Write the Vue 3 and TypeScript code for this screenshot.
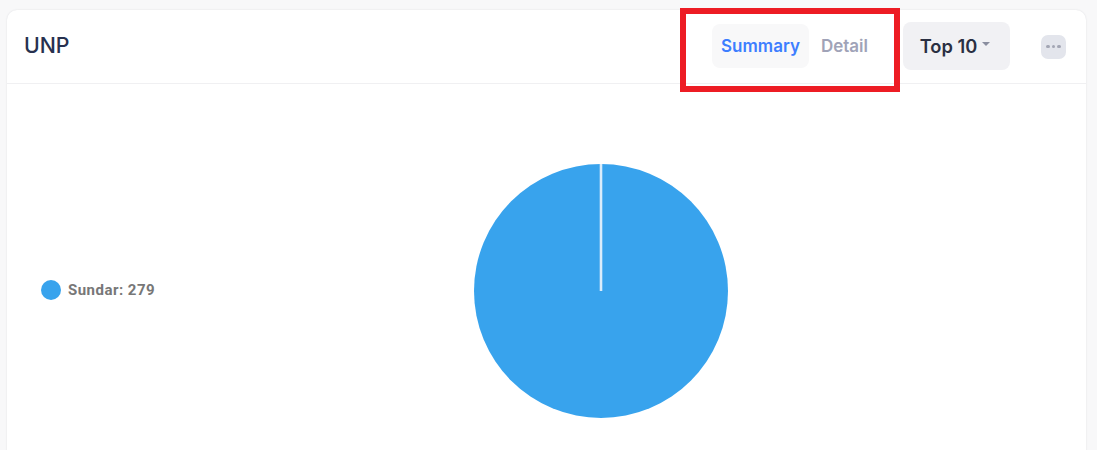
<script setup lang="ts">
const tabs: { label: string; active: boolean }[] = [
  { label: 'Summary', active: true },
  { label: 'Detail', active: false },
]
</script>

<template>
  <div class="page">
    <section class="card">
      <header class="head">
        <h2 class="title">UNP</h2>
        <nav class="tabs">
          <a v-for="t in tabs" :key="t.label" class="tab" :class="{ active: t.active }">{{ t.label }}</a>
        </nav>
        <button class="top">Top 10<span class="caret"></span></button>
        <button class="more" aria-label="More"><i></i><i></i><i></i></button>
      </header>
      <div class="body">
        <div class="legend">
          <span class="dot"></span>
          <span class="label">Sundar: 279</span>
        </div>
        <svg class="pie" width="254" height="254" viewBox="0 0 254 254">
          <circle cx="127" cy="127" r="127" fill="#38a3ed" />
          <line x1="127" y1="0" x2="127" y2="127" stroke="#d9ecfb" stroke-width="2.6" />
        </svg>
      </div>
      <div class="mark"></div>
    </section>
  </div>
</template>

<style>
html, body { margin: 0; background: #fff; }
</style>

<style scoped>
.page {
  width: 1097px;
  height: 450px;
  box-sizing: border-box;
  padding: 10px 11px 0 7px;
  background: #f8f8f9;
  overflow: hidden;
  font-family: Inter, "Liberation Sans", sans-serif;
}
.card {
  position: relative;
  height: 460px;
  background: #fff;
  border-radius: 10px;
  box-shadow: 0 0 2px rgba(30, 40, 60, 0.12);
}
.head {
  height: 74px;
  box-sizing: border-box;
  border-bottom: 1px solid #f0f0f2;
  display: flex;
  align-items: center;
  padding: 0 20px 0 17px;
}
.title {
  margin: 0 auto 4px 0;
  font-size: 21.3px;
  font-weight: 500;
  line-height: 24px;
  color: #27314f;
}
.tabs {
  display: flex;
  margin-bottom: 2px;
}
.tab {
  height: 44px;
  box-sizing: border-box;
  display: flex;
  align-items: center;
  padding: 0 9px 0 12px;
  margin-right: 26px;
  font-size: 17px;
  font-weight: 600;
  color: #a0a3b8;
  border-radius: 8px;
}
.tab:first-child { margin-right: 0; padding: 0 9px; }
.tab.active {
  background: #f8f8f9;
  color: #3d7eff;
}
.top {
  width: 107px;
  height: 48px;
  margin: 0 31px 2px 0;
  padding: 0 3px 0 0;
  border: 0;
  border-radius: 8px;
  background: #f1f1f4;
  color: #2a2f42;
  font: 600 18.3px Inter, "Liberation Sans", sans-serif;
  display: flex;
  align-items: center;
  justify-content: center;
}
.caret {
  margin-left: 5px;
  margin-bottom: 3px;
  border-left: 4px solid transparent;
  border-right: 4px solid transparent;
  border-top: 4px solid #8a8e9f;
}
.more {
  width: 25px;
  height: 24px;
  padding: 0;
  border: 0;
  border-radius: 7px;
  background: #e3e5ec;
  display: flex;
  align-items: center;
  justify-content: center;
  gap: 2px;
}
.more i {
  width: 3.5px;
  height: 3.5px;
  border-radius: 50%;
  background: #a3a6b4;
}
.body {
  position: relative;
  display: flex;
  justify-content: center;
  padding-top: 80px;
}
.pie {
  display: block;
  margin-left: 109px;
}
.legend {
  position: absolute;
  left: 34px;
  top: 196px;
  display: flex;
  align-items: center;
  gap: 7px;
}
.dot {
  width: 20px;
  height: 20px;
  border-radius: 50%;
  background: #38a3ed;
}
.label {
  font: 700 15px Roboto, "Liberation Sans", sans-serif;
  letter-spacing: 0.48px;
  color: #777;
}
.mark {
  position: absolute;
  left: 673px;
  top: -2px;
  width: 220px;
  height: 84px;
  box-sizing: border-box;
  border: 6px solid #ed1c24;
  pointer-events: none;
}
</style>
